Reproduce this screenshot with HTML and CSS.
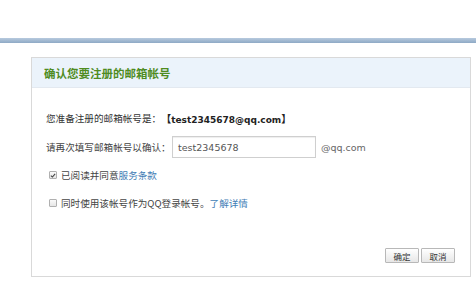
FILE: index.html
```html
<!DOCTYPE html>
<html lang="zh-CN">
<head>
<meta charset="utf-8">
<title>确认邮箱帐号</title>
<link rel="stylesheet" href="styles.css">
</head>
<body>
<div class="band"></div>
<div class="card">
  <div class="card-head">确认您要注册的邮箱帐号</div>
  <div class="card-body">
    <div class="row row-info">您准备注册的邮箱帐号是：<b class="addr">【<span class="lat">test2345678@qq.com</span>】</b></div>
    <div class="row row-input">
      <span class="label">请再次填写邮箱帐号以确认：</span>
      <span class="field">test2345678</span>
      <span class="suffix">@qq.com</span>
    </div>
    <div class="row row-check">
      <span class="cb"><svg width="7" height="7" viewBox="0 0 7 7"><path d="M1 3.6 L2.8 5.3 L6 1.6" fill="none" stroke="#444" stroke-width="1.3"/></svg></span>
      <span>已阅读并同意<a class="link" href="#">服务条款</a></span>
    </div>
    <div class="row row-check">
      <span class="cb"></span>
      <span>同时使用该帐号作为QQ登录帐号。<a class="link" href="#">了解详情</a></span>
    </div>
    <div class="actions">
      <span class="btn">确定</span>
      <span class="btn">取消</span>
    </div>
  </div>
</div>
</body>
</html>
```
FILE: styles.css
```css
html, body {
  margin: 0;
  padding: 0;
  background: #fff;
}
body {
  font-family: "DejaVu Sans", "Noto Sans CJK SC", sans-serif;
  color: #444;
}
.band {
  margin-top: 38px;
  height: 5px;
  background: linear-gradient(#b7cade, #8ea9c5);
}
.card {
  box-sizing: border-box;
  margin: 14px 0 0 31px;
  width: 440px;
  height: 220px;
  border: 1px solid #d9d9d9;
  box-shadow: 0 1px 0 #ececec;
  display: flex;
  flex-direction: column;
}
.card-head {
  height: 29px;
  background: #ebf3fb;
  border-bottom: 1px solid #e3e9f0;
  padding-left: 12px;
  display: flex;
  align-items: center;
  font-family: "Noto Sans CJK SC", sans-serif;
  font-weight: bold;
  font-size: 11.5px;
  color: #4f8c1f;
}
.card-body {
  flex: 1;
  display: flex;
  flex-direction: column;
  padding: 20px 15px 0 14px;
  font-family: "Noto Sans CJK SC", sans-serif;
  font-size: 9.6px;
}
.row {
  display: flex;
  align-items: center;
}
.row-info {
  height: 20px;
  color: #333;
}
.addr {
  font-size: 10px;
  color: #222;
}
.lat {
  font-family: "DejaVu Sans", sans-serif;
  font-size: 9px;
  font-weight: bold;
}
.row-input {
  height: 22px;
  margin-top: 8px;
}
.label {
  width: 126px;
}
.field {
  box-sizing: border-box;
  width: 144px;
  height: 22px;
  border: 1px solid #cfcfcf;
  box-shadow: inset 0 1px 1px #eee;
  padding-left: 5px;
  display: flex;
  align-items: center;
  font-family: "DejaVu Sans", sans-serif;
  font-size: 9.5px;
  color: #555;
}
.suffix {
  margin-left: 5px;
  font-family: "DejaVu Sans", sans-serif;
  font-size: 9.5px;
  color: #666;
}
.row-check {
  height: 20px;
  margin-top: 7px;
}
.row-check + .row-check {
  margin-top: 8px;
}
.cb {
  box-sizing: border-box;
  width: 8px;
  height: 8px;
  margin: 0 4px 0 3px;
  border: 1px solid #b0b0b0;
  border-radius: 1px;
  background: linear-gradient(#fafafa, #e6e6e6);
  display: flex;
  align-items: center;
  justify-content: center;
}
.cb svg {
  display: block;
}
.link {
  color: #3f7db5;
  text-decoration: none;
}
.actions {
  margin-top: 35px;
  display: flex;
  justify-content: flex-end;
  gap: 2px;
}
.btn {
  box-sizing: border-box;
  width: 34px;
  height: 15px;
  border: 1px solid #b8b8b8;
  border-radius: 1px;
  background: linear-gradient(#ffffff, #e7e7e7);
  display: flex;
  align-items: center;
  justify-content: center;
  font-size: 8.5px;
  color: #333;
}
```
